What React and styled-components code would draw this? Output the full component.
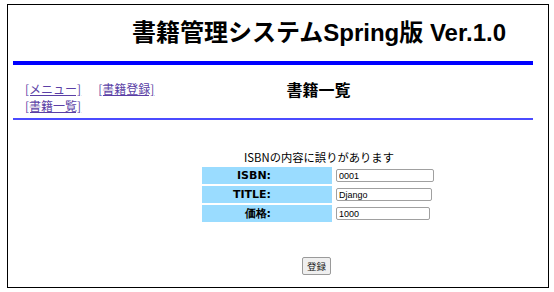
import React from 'react';
import styled, { createGlobalStyle } from 'styled-components';

const GlobalStyle = createGlobalStyle`
  html, body {
    margin: 0;
    padding: 0;
    background: #ffffff;
  }
  body {
    font-family: "Noto Sans CJK JP", "DejaVu Sans", sans-serif;
    color: #000;
  }
`;

const Frame = styled.div`
  box-sizing: border-box;
  margin: 4px 0 0 7px;
  width: 542px;
  height: 284px;
  border: 1px solid #000;
  padding: 0 15px 0 5px;
`;

const TitleBar = styled.div`
  height: 56px;
  padding: 0 0 5px 92px;
  box-sizing: border-box;
  display: flex;
  align-items: center;
  justify-content: center;
`;

const Title = styled.h1`
  margin: 0;
  font-family: "Liberation Sans", "Noto Sans CJK JP", sans-serif;
  font-size: 24px;
  font-weight: 700;
`;

const Rule = styled.hr`
  margin: 0;
  border: 0;
  height: ${p => p.$thick ? '4px' : '2px'};
  background: ${p => p.$thick ? '#0000ff' : '#4b4bff'};
`;

const NavRow = styled.div`
  display: grid;
  grid-template-columns: 152px 1fr;
  height: 53px;
  box-sizing: border-box;
  padding-top: 15px;
`;

const Nav = styled.nav`
  display: flex;
  flex-wrap: wrap;
  column-gap: 17px;
  padding-left: 12px;
  align-content: flex-start;
`;

const NavLink = styled.a`
  font-size: 12px;
  line-height: 17px;
  color: #5b3fa6;
  text-decoration: underline;
  white-space: nowrap;
`;

const Heading = styled.h2`
  margin: 0;
  padding: 1px 61px 0 0;
  text-align: center;
  font-size: 16px;
  line-height: 17px;
  font-weight: 700;
`;

const Main = styled.div`
  padding-left: 92px;
  text-align: center;
`;

const Message = styled.p`
  margin: 29px 0 0;
  font-size: 11.3px;
  line-height: 16px;
`;

const FormTable = styled.table`
  margin: 0 auto;
  border-spacing: 2px;
`;

const Label = styled.th`
  width: 130px;
  height: 17px;
  padding: 0 61px 0 0;
  box-sizing: border-box;
  background: #9adcff;
  text-align: right;
  font-family: "DejaVu Sans", sans-serif;
  font-size: 11px;
  font-weight: 700;
`;

const Cell = styled.td`
  width: 100px;
  padding: 0 0 0 2px;
  text-align: left;
`;

const Input = styled.input`
  box-sizing: border-box;
  width: ${p => p.$w}px;
  height: 13px;
  padding: 0 2px;
  border: 1px solid #a0a0a0;
  border-radius: 2px;
  font-family: "Liberation Sans", sans-serif;
  font-size: 9px;
  display: block;
`;

const Submit = styled.button`
  margin: 33px 5px 0 0;
  width: 29px;
  height: 18px;
  padding: 0;
  background: #efefef;
  border: 1px solid #9a9a9a;
  border-radius: 2px;
  font-family: "Noto Sans CJK JP", sans-serif;
  font-size: 9.5px;
  color: #222;
`;

const fields = [
  { label: 'ISBN:', value: '0001', w: 98 },
  { label: 'TITLE:', value: 'Django', w: 96 },
  { label: '価格:', value: '1000', w: 94 },
];

export default function App() {
  return (
    <>
      <GlobalStyle />
      <Frame>
        <TitleBar>
          <Title>書籍管理システムSpring版 Ver.1.0</Title>
        </TitleBar>
        <Rule $thick />
        <NavRow>
          <Nav>
            <NavLink href="#">[メニュー]</NavLink>
            <NavLink href="#">[書籍登録]</NavLink>
            <NavLink href="#">[書籍一覧]</NavLink>
          </Nav>
          <Heading>書籍一覧</Heading>
        </NavRow>
        <Rule />
        <Main>
          <Message>ISBNの内容に誤りがあります</Message>
          <form onSubmit={e => e.preventDefault()}>
            <FormTable>
              <tbody>
                {fields.map(f => (
                  <tr key={f.label}>
                    <Label>{f.label}</Label>
                    <Cell><Input $w={f.w} defaultValue={f.value} /></Cell>
                  </tr>
                ))}
              </tbody>
            </FormTable>
            <Submit type="submit">登録</Submit>
          </form>
        </Main>
      </Frame>
    </>
  );
}
